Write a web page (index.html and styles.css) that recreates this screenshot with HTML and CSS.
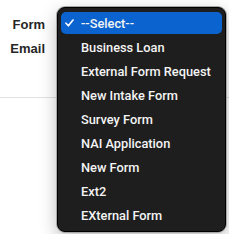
FILE: index.html
```html
<!DOCTYPE html>
<html lang="en">
<head>
    <meta charset="UTF-8">
    <meta name="viewport" content="width=device-width, initial-scale=1.0">
    <title>Form Picker</title>
    <link rel="stylesheet" href="styles.css">
</head>
<body>
    <div class="fields">
        <div class="field">
            <label class="field-label">Form</label>
        </div>
        <div class="field">
            <label class="field-label">Email</label>
        </div>
    </div>
    <div class="divider"></div>

    <ul class="dropdown">
        <li class="option selected">
            <svg class="check" width="9" height="8" viewBox="0 0 9 8">
                <polyline points="1,4.2 3.4,6.8 8,1" fill="none" stroke="#fff" stroke-width="1.6" stroke-linecap="round" stroke-linejoin="round"/>
            </svg>
            --Select--
        </li>
        <li class="option">Business Loan</li>
        <li class="option">External Form Request</li>
        <li class="option">New Intake Form</li>
        <li class="option">Survey Form</li>
        <li class="option">NAI Application</li>
        <li class="option">New Form</li>
        <li class="option">Ext2</li>
        <li class="option">EXternal Form</li>
    </ul>
</body>
</html>
```

FILE: styles.css
```css
* {
    margin: 0;
    padding: 0;
    box-sizing: border-box;
}
body {
    background: #fff;
    font-family: "Liberation Sans", Arial, sans-serif;
    position: relative;
    width: 229px;
    height: 234px;
    overflow: hidden;
}
.fields {
    display: flex;
    flex-direction: column;
    padding-top: 12px;
}
.field {
    height: 24px;
    display: flex;
    align-items: center;
}
.field-label {
    width: 45px;
    text-align: right;
    font-size: 13px;
    font-weight: bold;
    color: #262626;
}
.divider {
    margin-top: 37px;
    height: 1px;
    background: #e2e2e2;
}
.dropdown {
    list-style: none;
    position: absolute;
    left: 57px;
    top: 7px;
    width: 169px;
    height: 225px;
    background: #1e1e1e;
    border: 1px solid #000;
    border-radius: 8px;
    box-shadow: 0 0 0 1px #a8a8a8, 0 6px 18px rgba(0, 0, 0, 0.28);
    padding: 4px 3px;
}
.option {
    height: 22px;
    margin-bottom: 2px;
    display: flex;
    align-items: center;
    padding-left: 20px;
    position: relative;
    color: #f4f4f4;
    font-family: Roboto, "Liberation Sans", sans-serif;
    font-weight: 500;
    font-size: 12.8px;
    border-radius: 5px;
}
.option.selected {
    background: #0b63cf;
}
.check {
    position: absolute;
    left: 4px;
    top: 7px;
}
```
